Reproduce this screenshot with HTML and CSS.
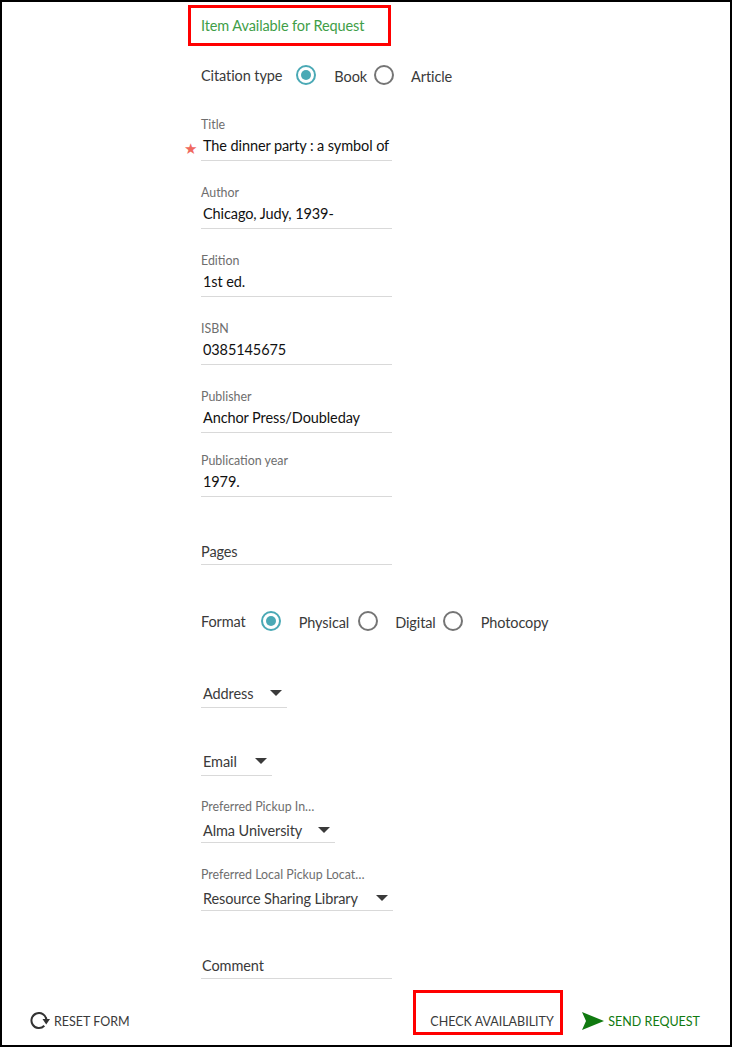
FILE: index.html
```html
<!DOCTYPE html>
<html lang="en">
<head>
  <meta charset="UTF-8" />
  <title>Resource Sharing Request</title>
  <link rel="stylesheet" href="styles.css">
</head>
<body>
  <div class="frame">
    <div class="form">
      <div class="notice">Item Available for Request</div>

      <div class="radio-row citation">
        <span class="radio-label">Citation type</span>
        <span class="radio on"></span><span class="option">Book</span>
        <span class="radio"></span><span class="option opt-digital">Article</span>
      </div>

      <div class="field first">
        <label>Title</label>
        <span class="required">★</span>
        <div class="value">The dinner party : a symbol of</div>
      </div>
      <div class="field">
        <label>Author</label>
        <div class="value">Chicago, Judy, 1939-</div>
      </div>
      <div class="field">
        <label>Edition</label>
        <div class="value">1st ed.</div>
      </div>
      <div class="field">
        <label>ISBN</label>
        <div class="value">0385145675</div>
      </div>
      <div class="field">
        <label>Publisher</label>
        <div class="value">Anchor Press/Doubleday</div>
      </div>
      <div class="field short">
        <label>Publication year</label>
        <div class="value">1979.</div>
      </div>
      <div class="field">
        <div class="value empty">Pages</div>
      </div>

      <div class="radio-row format">
        <span class="radio-label">Format</span>
        <span class="radio on"></span><span class="option opt-physical">Physical</span>
        <span class="radio"></span><span class="option opt-digital">Digital</span>
        <span class="radio"></span><span class="option">Photocopy</span>
      </div>

      <div class="field select-address">
        <div class="value select">Address<span class="caret"></span></div>
      </div>
      <div class="field select-email">
        <div class="value select">Email<span class="caret"></span></div>
      </div>
      <div class="field select-pickup">
        <label>Preferred Pickup In…</label>
        <div class="value select">Alma University<span class="caret"></span></div>
      </div>
      <div class="field select-local">
        <label>Preferred Local Pickup Locat…</label>
        <div class="value select">Resource Sharing Library<span class="caret"></span></div>
      </div>
      <div class="field comment">
        <div class="value empty">Comment</div>
      </div>
    </div>

    <div class="actions">
      <button class="action reset">
        <svg width="20" height="18" viewBox="0 0 20 18"><path d="M14.3 13.800A7.500 7.500 0 1 1 16.400 7.500" fill="none" stroke="#333" stroke-width="2"/><path d="M12.500 7H20L16.200 12.500Z" fill="#333"/></svg>
        RESET FORM
      </button>
      <button class="action check">CHECK AVAILABILITY</button>
      <button class="action send">
        <svg width="22" height="18" viewBox="0 0 22 18"><path d="M0 0 22 9 0 18 4 9Z" fill="#107a10"/></svg>
        SEND REQUEST
      </button>
    </div>
  </div>
</body>
</html>
```

FILE: styles.css
```css
html, body {
  margin: 0;
  padding: 0;
  background: white;
}
.frame {
  box-sizing: border-box;
  width: 732px;
  height: 1047px;
  border: 2px solid black;
  font-family: "Lato", sans-serif;
  font-size: 14.5px;
  letter-spacing: -0.1px;
  color: #3a3a3a;
  position: relative;
}
.form {
  width: 191px;
  margin-left: 199px;
}
.notice {
  box-sizing: border-box;
  width: 203px;
  height: 41px;
  margin: 3px 0 0 -13px;
  padding-left: 10px;
  line-height: 36px;
  border: 3px solid #ff0000;
  color: #3f9e48;
  white-space: nowrap;
}
.radio-row {
  display: flex;
  align-items: center;
  white-space: nowrap;
  height: 22px;
}
.citation {
  margin-top: 18px;
  width: 300px;
}
.citation .radio-label {
  margin-right: 14px;
}
.format {
  margin-top: 45px;
  margin-bottom: 8px;
  width: 400px;
}
.radio {
  box-sizing: border-box;
  flex: none;
  width: 20px;
  height: 20px;
  border: 2px solid #757575;
  border-radius: 50%;
  background: white;
}
.radio.on {
  border-color: #4aa9b5;
  padding: 3px;
  background: #4aa9b5 content-box;
}
.radio-label {
  margin-right: 15px;
}
.option {
  margin-left: 18px;
  margin-right: 7px;
  padding-top: 2px;
}
.opt-physical {
  margin-right: 9px;
}
.opt-digital {
  margin-left: 17px;
}
.field {
  position: relative;
  box-sizing: border-box;
  height: 68px;
  padding-top: 24px;
  border-bottom: 1px solid #d9d9d9;
}
.field.first {
  height: 75px;
  padding-top: 31px;
}
.field.short {
  height: 64px;
  padding-top: 20px;
}
.field label {
  display: block;
  height: 18px;
  line-height: 16px;
  font-size: 12.400px;
  letter-spacing: 0;
  color: #6e6e6e;
  white-space: nowrap;
}
.value {
  height: 22px;
  line-height: 22px;
  padding-left: 2px;
  color: #111;
  white-space: nowrap;
}
.value.empty {
  margin-top: 20px;
  color: #3a3a3a;
  padding-left: 0;
}
.comment .value.empty {
  margin-top: 20px;
  padding-left: 1px;
}
.required {
  position: absolute;
  left: -17px;
  top: 53px;
  color: #f0695f;
  font-family: "DejaVu Sans", sans-serif;
  font-size: 15px;
  line-height: 20px;
}
.select {
  display: flex;
  justify-content: space-between;
  align-items: center;
  color: #3a3a3a;
  padding-right: 5px;
}
.caret {
  width: 0;
  height: 0;
  border-left: 6px solid transparent;
  border-right: 6px solid transparent;
  border-top: 6px solid #3a3a3a;
  margin-top: -2px;
}
.select-address {
  width: 86px;
}
.select-address .value, .select-email .value {
  margin-top: 19px;
}
.select-email {
  width: 71px;
}
.select-pickup {
  width: 134px;
  height: 67px;
  padding-top: 23px;
}
.select-pickup label, .select-local label {
  height: 21px;
}
.select-local {
  width: 192px;
}
.actions {
  position: absolute;
  left: 0;
  right: 0;
  bottom: 0;
  display: flex;
  align-items: flex-end;
  padding: 0 30px 7px 28px;
}
.action {
  display: flex;
  align-items: center;
  gap: 4px;
  border: none;
  background: none;
  padding: 0;
  font: inherit;
  font-size: 12.500px;
  color: #3a3a3a;
  height: 34px;
  white-space: nowrap;
}
.reset {
  margin-right: auto;
}
.check {
  box-sizing: border-box;
  width: 150px;
  height: 45px;
  border: 3px solid #ff0000;
  padding: 18px 0 0 14px;
  margin-right: 19px;
  margin-bottom: 3px;
}
.send {
  color: #107a10;
}
```
